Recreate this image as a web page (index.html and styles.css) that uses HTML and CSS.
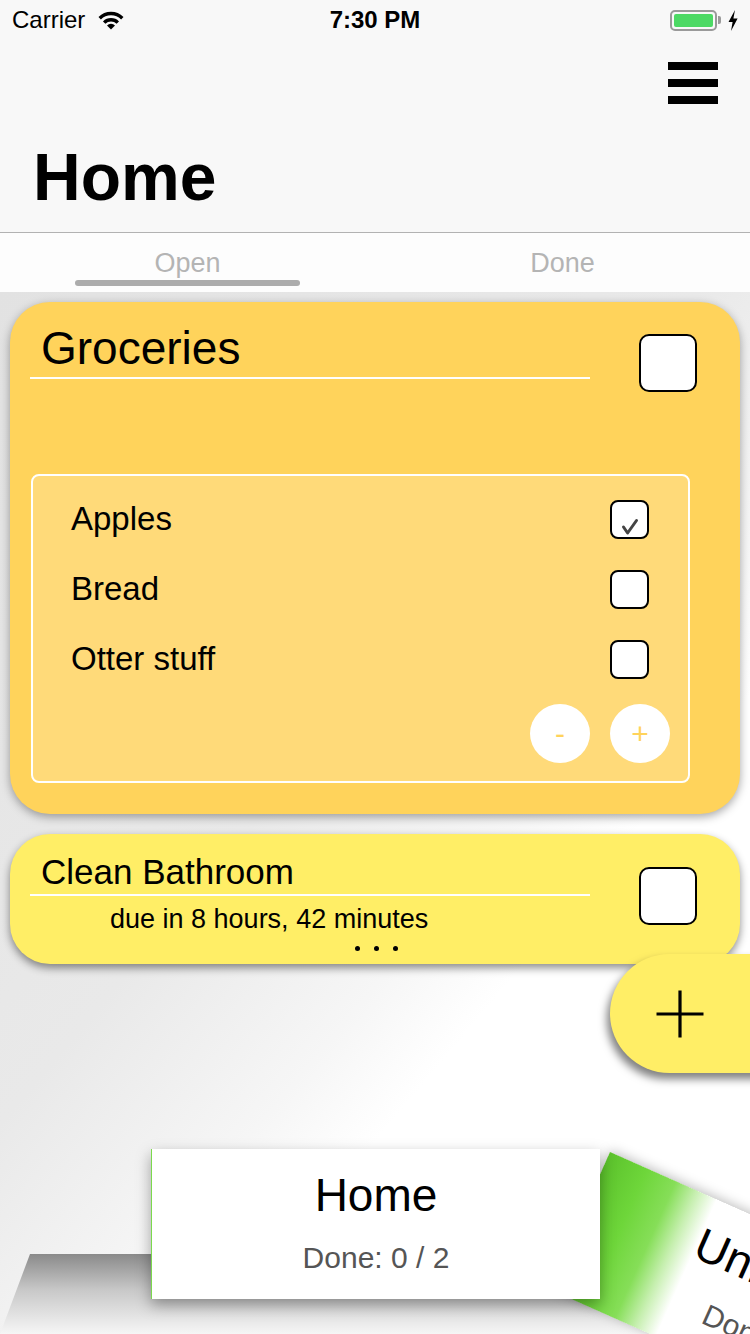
FILE: index.html
```html
<!DOCTYPE html>
<html lang="en">
<head>
<meta charset="utf-8">
<title>Home</title>
<link rel="stylesheet" href="styles.css">
</head>
<body>
<div class="app">
  <header class="status-bar">
    <div class="status-left">
      <span class="carrier">Carrier</span>
      <svg class="wifi" width="28" height="20" viewBox="0 0 28 20">
        <path d="M2.7 8.2 A16 16 0 0 1 25.3 8.2" fill="none" stroke="#000" stroke-width="3.4"/>
        <path d="M7.2 12.6 A9.6 9.6 0 0 1 20.8 12.6" fill="none" stroke="#000" stroke-width="3.4"/>
        <path d="M14 19.5 L10 15.5 A5.6 5.6 0 0 1 18 15.5 Z" fill="#000"/>
      </svg>
    </div>
    <div class="status-time">7:30 PM</div>
    <div class="status-right">
      <div class="battery"><div class="battery-fill"></div></div>
      <div class="battery-nub"></div>
      <svg class="bolt" width="10" height="21" viewBox="0 0 10 21">
        <path d="M7 0 L0.5 12 L4.6 12 L3 21 L9.6 8.4 L5.4 8.4 Z" fill="#000"/>
      </svg>
    </div>
  </header>

  <div class="nav">
    <div class="nav-top">
      <div class="menu"><span></span><span></span><span></span></div>
    </div>
    <h1 class="nav-title">Home</h1>
  </div>

  <div class="tabs">
    <div class="tab active"><span class="tab-label">Open</span><span class="tab-indicator"></span></div>
    <div class="tab"><span class="tab-label">Done</span></div>
  </div>

  <main class="content">
    <section class="card card-orange">
      <div class="card-head">
        <div class="card-titles">
          <div class="card-title title-lg">Groceries</div>
        </div>
        <div class="checkbox big"></div>
      </div>
      <div class="sublist">
        <div class="sub-row">
          <span class="sub-name">Apples</span>
          <div class="checkbox small">
            <svg width="35" height="35" viewBox="0 0 35 35"><path d="M11.5 25 L15.6 31 L24.5 18.5" fill="none" stroke="#444" stroke-width="3" stroke-linecap="round" stroke-linejoin="round"/></svg>
          </div>
        </div>
        <div class="sub-row">
          <span class="sub-name">Bread</span>
          <div class="checkbox small"></div>
        </div>
        <div class="sub-row">
          <span class="sub-name">Otter stuff</span>
          <div class="checkbox small"></div>
        </div>
        <div class="sub-actions">
          <button class="round-btn">-</button>
          <button class="round-btn">+</button>
        </div>
      </div>
    </section>

    <section class="card card-yellow">
      <div class="card-head">
        <div class="card-titles">
          <div class="card-title title-md">Clean Bathroom</div>
          <div class="card-due">due in 8 hours, 42 minutes</div>
        </div>
        <div class="checkbox big b2"></div>
      </div>
      <div class="dots"><span></span><span></span><span></span></div>
    </section>
  </main>

  <button class="fab" aria-label="Add">
    <svg width="50" height="50" viewBox="0 0 50 50">
      <path d="M1.5 25 H48.5 M25 1.5 V48.5" stroke="#000" stroke-width="3.2"/>
    </svg>
  </button>

  <div class="floor"></div>
  <div class="list-card side">
    <div class="list-name">Unfinished</div>
    <div class="list-done">Done: 0 / 1</div>
  </div>
  <div class="list-card current">
    <div class="list-name">Home</div>
    <div class="list-done">Done: 0 / 2</div>
  </div>
</div>
</body>
</html>
```

FILE: styles.css
```css
* { box-sizing: border-box; }
html, body { margin: 0; padding: 0; }
body {
  width: 750px;
  height: 1334px;
  overflow: hidden;
  font-family: "Liberation Sans", Arial, sans-serif;
  color: #000;
}
.app {
  position: relative;
  width: 750px;
  height: 1334px;
  overflow: hidden;
  display: flex;
  flex-direction: column;
  background: #f8f8f8;
}

/* status bar */
.status-bar {
  height: 40px;
  flex: none;
  display: grid;
  grid-template-columns: 1fr auto 1fr;
  align-items: center;
  padding: 0 12px;
  background: #f8f8f8;
}
.status-left { display: flex; align-items: center; gap: 12px; }
.carrier { font-size: 24px; line-height: 28px; }
.wifi { display: block; margin-top: -1px; }
.status-time { font-size: 24px; font-weight: bold; line-height: 28px; }
.status-right { display: flex; align-items: center; justify-content: flex-end; }
.battery {
  width: 47px; height: 21px;
  border: 2px solid #9a9a9a;
  border-radius: 5px;
  padding: 2px;
}
.battery-fill { width: 100%; height: 100%; background: #4cd964; border-radius: 2px; }
.battery-nub { width: 3px; height: 8px; background: #9a9a9a; border-radius: 0 2px 2px 0; margin-left: 1px; }
.bolt { display: block; margin-left: 7px; }

/* nav */
.nav {
  height: 193px;
  flex: none;
  border-bottom: 1px solid #b2b2b2;
  background: #f8f8f8;
}
.nav-top { display: flex; justify-content: flex-end; padding: 22px 32px 0 0; }
.menu { display: flex; flex-direction: column; gap: 9px; }
.menu span { display: block; width: 50px; height: 8px; background: #000; }
.nav-title {
  margin: 40px 0 0;
  padding-left: 33px;
  font-size: 66px;
  line-height: 66px;
  font-weight: bold;
}

/* tabs */
.tabs {
  height: 59px;
  flex: none;
  display: flex;
  background: #fdfdfd;
}
.tab {
  flex: 1;
  display: flex;
  flex-direction: column;
  align-items: center;
  padding-top: 14px;
}
.tab-label { font-size: 27px; line-height: 32px; color: #b4b4b4; }
.tab-indicator {
  display: block;
  width: 225px; height: 6px;
  border-radius: 3px;
  background: #acacac;
  margin-top: 1px;
}

/* content */
.content {
  flex: 1;
  padding: 10px 10px 0;
  background: linear-gradient(130deg, #e2e2e2 0%, #e9e9e9 43%, #f6f6f6 59%, #ffffff 67%, #ffffff 100%);
}
.card {
  border-radius: 40px;
  display: flex;
  flex-direction: column;
}
.card-orange {
  background: #ffd35b;
  padding-bottom: 31px;
  box-shadow: 0 3px 10px rgba(0, 0, 0, 0.35);
}
.card-yellow {
  margin-top: 20px;
  background: #ffee66;
  padding-bottom: 13.5px;
  box-shadow: 0 4px 9px rgba(0, 0, 0, 0.45);
}
.card-head { display: flex; align-items: flex-start; }
.card-titles { flex: 1; margin-left: 20px; margin-right: 49px; }
.card-title {
  padding-left: 11px;
  border-bottom: 2px solid #fff;
}
.title-lg { font-size: 46px; line-height: 46px; padding-top: 23px; padding-bottom: 6px; }
.title-md { font-size: 35px; line-height: 35px; padding-top: 20px; padding-bottom: 5px; }
.card-due {
  margin-top: 8px;
  padding-left: 80px;
  font-size: 27px;
  line-height: 30px;
}
.checkbox {
  flex: none;
  background: #fff;
  border: 2px solid #000;
}
.checkbox.big {
  width: 58px; height: 58px;
  border-radius: 10px;
  margin: 32px 43px 0 0;
}
.checkbox.big.b2 { margin-top: 33px; }
.checkbox.small {
  width: 39px; height: 39px;
  border-radius: 8px;
}
.checkbox.small svg { display: block; }

.sublist {
  margin: 82px 50px 0 21px;
  height: 309px;
  border: 2px solid #fff;
  border-radius: 8px;
  background: #ffda79;
  padding: 8px 18px 0 38px;
}
.sub-row {
  height: 70px;
  display: flex;
  align-items: center;
  justify-content: space-between;
  padding-right: 21px;
}
.sub-name { font-size: 33px; line-height: 70px; }
.sub-actions {
  display: flex;
  justify-content: flex-end;
  gap: 20px;
  margin-top: 10px;
}
.round-btn {
  width: 60px; height: 59px;
  border-radius: 50%;
  border: none;
  background: #fff;
  color: #ffd35b;
  font-family: "Liberation Sans", Arial, sans-serif;
  font-size: 30px;
  line-height: 59px;
  padding: 0;
}

.dots {
  display: flex;
  justify-content: center;
  gap: 14px;
  margin-top: 11.5px;
  padding-left: 2px;
}
.dots span { width: 5px; height: 5px; border-radius: 50%; background: #000; }

/* floating add button */
.fab {
  position: absolute;
  left: 610px;
  top: 954px;
  width: 170px;
  height: 119px;
  border: none;
  padding: 0 0 0 45px;
  border-radius: 60px 0 0 60px;
  background: #ffee66;
  box-shadow: -3px 6px 8px rgba(0, 0, 0, 0.5);
  display: flex;
  align-items: center;
  z-index: 5;
}
.fab svg { display: block; }

/* list carousel */
.floor {
  position: absolute;
  left: 0;
  top: 1254px;
  width: 690px;
  height: 80px;
  clip-path: polygon(30px 0, 100% 0, 100% 100%, 0 100%);
  background: linear-gradient(180deg, #8a8a8a 0%, #c8c8c8 45%, #f6f6f6 100%);
}
.list-card {
  position: absolute;
  width: 450px;
  height: 150px;
  background: #fff;
  text-align: center;
  padding-top: 23px;
}
.list-name { font-size: 46px; line-height: 46px; }
.list-done { font-size: 30px; line-height: 36px; margin-top: 21.5px; color: #555; }
.list-card.current {
  left: 151px;
  top: 1149px;
  width: 449px;
  border-left: 1px solid #7bd94d;
  box-shadow: 0 6px 14px rgba(0, 0, 0, 0.35);
  z-index: 3;
}
.list-card.side {
  left: 610px;
  top: 1152px;
  transform-origin: 0 0;
  transform: rotate(24deg);
  background: linear-gradient(90deg, #5cc22c 0%, #6ed63a 9%, #86de58 16%, #c6efaf 21%, #ffffff 26%, #ffffff 100%);
  box-shadow: 0 -2px 12px rgba(0, 0, 0, 0.25);
  z-index: 2;
}
```
